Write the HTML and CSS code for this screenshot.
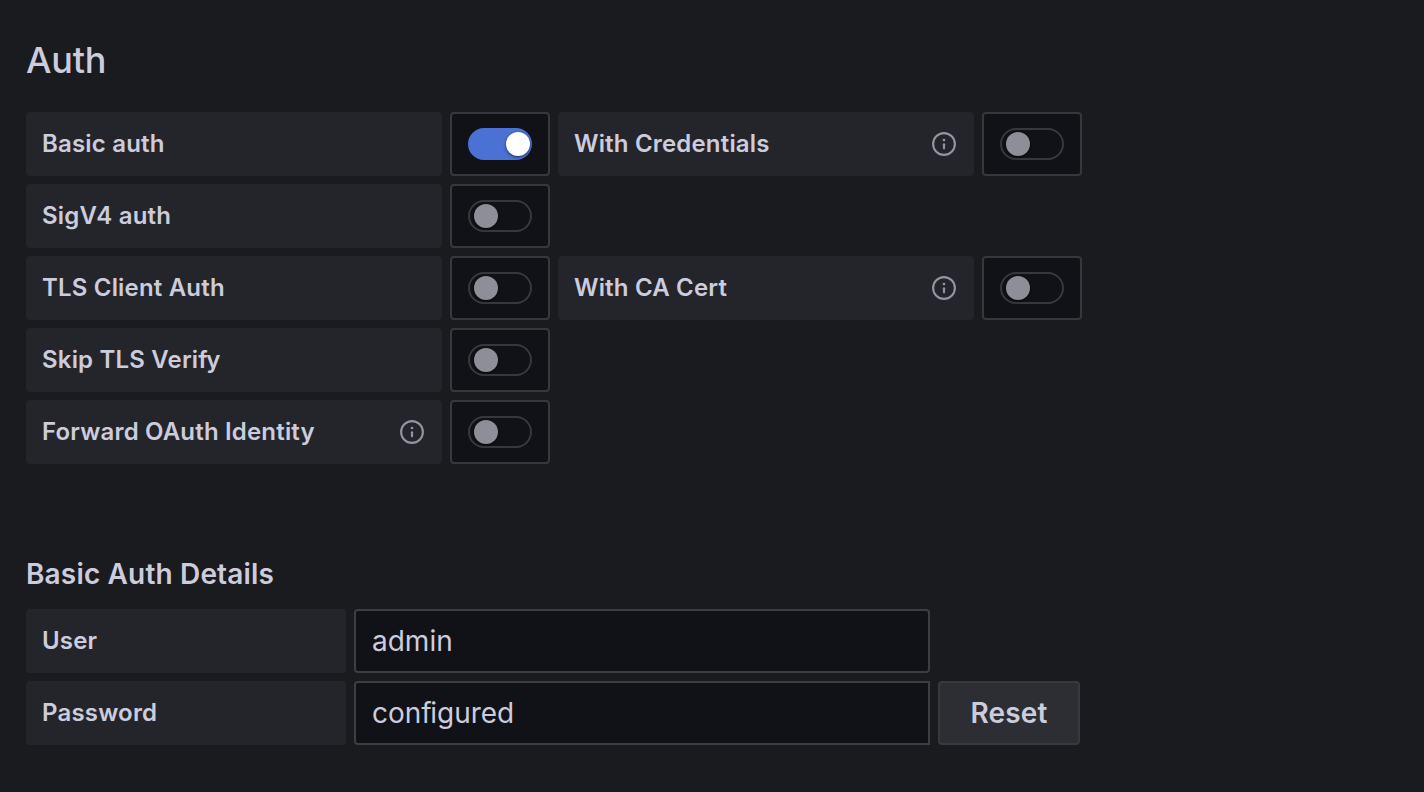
FILE: index.html
```html
<!DOCTYPE html>
<html lang="en">
<head>
<meta charset="utf-8">
<title>Auth</title>
<link rel="stylesheet" href="styles.css">
</head>
<body>
<svg class="defs" width="0" height="0"><symbol id="info" viewBox="0 0 24 24"><circle cx="12" cy="12" r="10.9" fill="none" stroke="currentColor" stroke-width="2.1"/><path d="M12 12.3v4" stroke="currentColor" stroke-width="2.2" stroke-linecap="round"/><circle cx="12" cy="8" r="1.35" fill="currentColor"/></symbol></svg>
<main>
<h1 class="title">Auth</h1>
<section class="rows">
<div class="row"><label class="label">Basic auth</label><div class="cell"><span class="switch on"></span></div><label class="label">With Credentials<svg class="icon"><use href="#info"/></svg></label><div class="cell"><span class="switch"></span></div></div>
<div class="row"><label class="label">SigV4 auth</label><div class="cell"><span class="switch"></span></div></div>
<div class="row"><label class="label">TLS Client Auth</label><div class="cell"><span class="switch"></span></div><label class="label">With CA Cert<svg class="icon"><use href="#info"/></svg></label><div class="cell"><span class="switch"></span></div></div>
<div class="row"><label class="label"><span>Skip TLS Veri<span class="tight">f</span>y</span></label><div class="cell"><span class="switch"></span></div></div>
<div class="row"><label class="label">Forward OAuth Identity<svg class="icon"><use href="#info"/></svg></label><div class="cell"><span class="switch"></span></div></div>
</section>
<h2 class="subtitle">Basic Auth Details</h2>
<section class="rows">
<div class="row"><label class="label short">User</label><div class="input"><span>admin</span></div></div>
<div class="row"><label class="label short">Password</label><div class="input square"><span>con<span class="tight">f</span>igured</span></div><button class="reset"><span>Reset</span></button></div>
</section>
</main>
</body>
</html>
```
FILE: styles.css
```css
* { box-sizing: border-box; }
body { margin: 0; height: 792px; overflow: hidden; background: #1a1b1f; color: #ccccdc; font-family: Inter, "Liberation Sans", sans-serif; }
main { padding: 38px 26px 0; }
.defs { display: block; width: 0; height: 0; }
.title { margin: 0 0 30px; font-size: 36px; line-height: 44px; font-weight: 450; letter-spacing: -.2px; }
.rows { display: flex; flex-direction: column; gap: 8px; }
.row { display: flex; gap: 8px; height: 64px; }
.label { display: flex; align-items: flex-start; justify-content: space-between; width: 416px; padding: 0 18px 0 16px; background: #24252b; border-radius: 4px; font-size: 24px; line-height: 63px; font-weight: 580; letter-spacing: .18px; }
.short { width: 320px; }
.tight { letter-spacing: -1.5px; }
.icon { width: 24px; height: 24px; margin-top: 20px; color: #9393a0; }
.cell { display: flex; align-items: center; justify-content: center; width: 100px; background: #111217; border: 2px solid #37383c; border-radius: 4px; }
.switch { display: flex; align-items: center; width: 64px; height: 32px; padding-left: 4px; border: 2px solid #37383c; border-radius: 16px; }
.switch::before { content: ""; width: 24px; height: 24px; border-radius: 50%; background: #8e8e99; box-shadow: 0 1px 3px rgba(0, 0, 0, .6); }
.on { background: #4a71d3; border-color: #4a71d3; padding-left: 36px; }
.on::before { background: #fff; }
.subtitle { margin: 94px 0 19px; font-size: 28px; line-height: 32px; font-weight: 560; letter-spacing: .16px; }
.input { display: flex; align-items: center; width: 576px; padding: 0 16px; background: #111217; border: 2px solid #3d3e42; border-radius: 4px; font-size: 28px; font-weight: 430; }
.square { border-radius: 4px 0 0 4px; }
.reset { width: 142px; padding: 0; background: #2d2e33; border: 2px solid #38393e; border-radius: 4px; color: #ccccdc; font: 600 28px Inter, sans-serif; letter-spacing: .1px; }
```
